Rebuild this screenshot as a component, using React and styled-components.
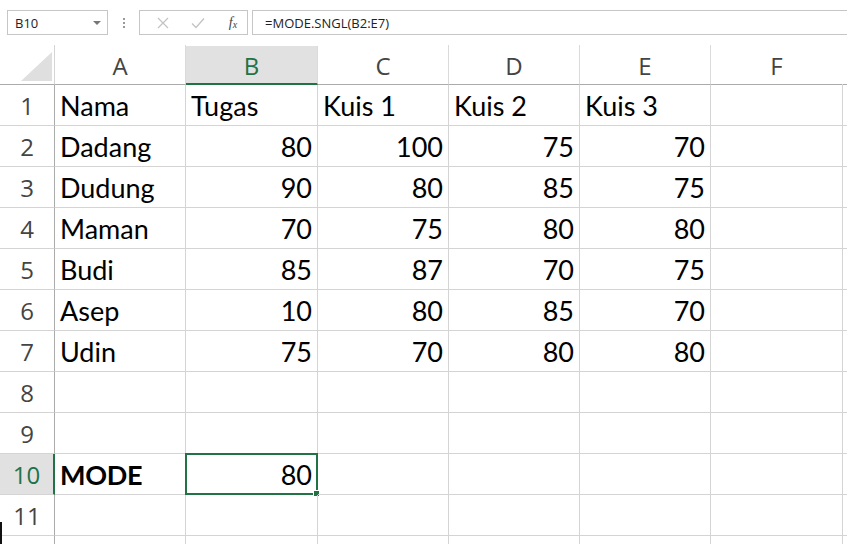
import styled, { createGlobalStyle } from "styled-components";

const GlobalStyle = createGlobalStyle`
  html, body {
    margin: 0;
    padding: 0;
    background: #ffffff;
  }
  body {
    font-family: "Open Sans", "Liberation Sans", sans-serif;
  }
`;

const colWidths = [55, 131, 132, 131, 131, 131, 132];
const columns = ["A", "B", "C", "D", "E", "F"];

const rows = [
  ["Nama", "Tugas", "Kuis 1", "Kuis 2", "Kuis 3", ""],
  ["Dadang", 80, 100, 75, 70, ""],
  ["Dudung", 90, 80, 85, 75, ""],
  ["Maman", 70, 75, 80, 80, ""],
  ["Budi", 85, 87, 70, 75, ""],
  ["Asep", 10, 80, 85, 70, ""],
  ["Udin", 75, 70, 80, 80, ""],
  ["", "", "", "", "", ""],
  ["", "", "", "", "", ""],
  ["MODE", 80, "", "", "", ""],
  ["", "", "", "", "", ""],
  ["", "", "", "", "", ""],
];

const Page = styled.div`
  width: 847px;
  height: 544px;
  overflow: hidden;
  position: relative;
  background: #fff;
`;

const Toolbar = styled.div`
  display: flex;
  align-items: center;
  height: 45px;
  padding: 10px 0 10px 7px;
  box-sizing: border-box;
  background: #fff;
`;

const NameBox = styled.div`
  width: 101px;
  height: 25px;
  box-sizing: border-box;
  border: 1px solid #c6c6c6;
  display: flex;
  align-items: center;
  justify-content: space-between;
  padding: 0 6px 0 7px;
  font-size: 13px;
  color: #222;
`;

const Caret = styled.span`
  width: 0;
  height: 0;
  border-left: 4px solid transparent;
  border-right: 4px solid transparent;
  border-top: 4px solid #777;
`;

const Grip = styled.div`
  width: 31px;
  display: flex;
  flex-direction: column;
  align-items: center;
  gap: 2px;
  & > span {
    width: 2px;
    height: 2px;
    background: #9a9a9a;
  }
`;

const FxBox = styled.div`
  width: 109px;
  height: 25px;
  box-sizing: border-box;
  border: 1px solid #c6c6c6;
  display: flex;
  align-items: center;
  padding-left: 13px;
  gap: 15px;
`;

const FxButton = styled.span`
  width: 20px;
  display: flex;
  justify-content: center;
  align-items: center;
  color: ${(p) => (p.$active ? "#444" : "#c4c4c4")};
  font-family: "Liberation Serif", serif;
  font-style: italic;
  font-size: 14px;
`;

const FormulaInput = styled.div`
  flex: 1;
  height: 25px;
  margin-left: 4px;
  box-sizing: border-box;
  border: 1px solid #c6c6c6;
  border-right: none;
  display: flex;
  align-items: center;
  padding-left: 12px;
  font-size: 13px;
  color: #222;
`;

const Sheet = styled.div`
  display: grid;
  grid-template-columns: ${colWidths.map((w) => w + "px").join(" ")} 1fr;
  grid-auto-rows: 41px;
  grid-template-rows: 40px;
`;

const Corner = styled.div`
  border-bottom: 1px solid #ababab;
  border-right: 1px solid #d4d4d4;
  position: relative;
  box-sizing: border-box;
  svg {
    position: absolute;
    left: 21px;
    top: 7px;
  }
`;

const ColHeader = styled.div`
  box-sizing: border-box;
  margin-top: ${(p) => (p.$selected ? "1px" : "0")};
  background: ${(p) => (p.$selected ? "#e1e1e1" : "#fff")};
  border-bottom: ${(p) => (p.$selected ? "2px solid #217346" : "1px solid #ababab")};
  border-right: 1px solid ${(p) => (p.$last ? "#fff" : "#dadada")};
  display: flex;
  align-items: center;
  justify-content: center;
  font-size: 24px;
  padding-top: ${(p) => (p.$selected ? "1px" : "2px")};
  color: ${(p) => (p.$selected ? "#217346" : "#444")};
  font-family: "Open Sans", "Liberation Sans", sans-serif;
`;

const RowHeader = styled.div`
  box-sizing: border-box;
  background: ${(p) => (p.$selected ? "#e1e1e1" : "#fff")};
  border-bottom: 1px solid #d4d4d4;
  border-right: ${(p) => (p.$selected ? "2px solid #217346" : "1px solid #ababab")};
  display: flex;
  align-items: center;
  justify-content: center;
  font-size: 24px;
  color: ${(p) => (p.$selected ? "#217346" : "#444")};
  font-family: "Open Sans", "Liberation Sans", sans-serif;
`;

const Cell = styled.div`
  box-sizing: border-box;
  border-bottom: 1px solid #d4d4d4;
  border-right: 1px solid #d4d4d4;
  display: flex;
  align-items: flex-end;
  justify-content: ${(p) => (p.$num ? "flex-end" : "flex-start")};
  padding: 0 5px 6px 5px;
  font-family: "Lato", "Liberation Sans", sans-serif;
  font-size: 27px;
  line-height: 1;
  font-weight: ${(p) => (p.$bold ? 700 : 400)};
  letter-spacing: ${(p) => (p.$bold ? "-0.3px" : "0")};
  color: #000;
  white-space: nowrap;
  position: relative;
`;

const Filler = styled.div`
  box-sizing: border-box;
  border-bottom: ${(p) => (p.$header ? "1px solid #ababab" : "1px solid #d4d4d4")};
`;

const Selection = styled.div`
  position: absolute;
  inset: -1px -1px -1px -1px;
  border: 2px solid #217346;
  pointer-events: none;
  &::after {
    content: "";
    position: absolute;
    right: -4px;
    bottom: -4px;
    width: 5px;
    height: 5px;
    background: #217346;
    border: 1px solid #fff;
  }
`;

const EdgeMark = styled.div`
  position: absolute;
  left: 0;
  top: 522px;
  width: 2px;
  height: 22px;
  background: #111;
`;

export default function App() {
  return (
    <Page>
      <GlobalStyle />
      <Toolbar>
        <NameBox>
          B10
          <Caret />
        </NameBox>
        <Grip>
          <span />
          <span />
          <span />
        </Grip>
        <FxBox>
          <FxButton>
            <svg width="12" height="12" viewBox="0 0 12 12">
              <path d="M1 1 L11 11 M11 1 L1 11" stroke="#c4c4c4" strokeWidth="1.3" fill="none" />
            </svg>
          </FxButton>
          <FxButton>
            <svg width="14" height="12" viewBox="0 0 14 12">
              <path d="M1 6.5 L5 10.5 L13 1.5" stroke="#c4c4c4" strokeWidth="1.4" fill="none" />
            </svg>
          </FxButton>
          <FxButton $active>
            f<span style={{ fontSize: "10px", marginTop: "3px" }}>x</span>
          </FxButton>
        </FxBox>
        <FormulaInput>=MODE.SNGL(B2:E7)</FormulaInput>
      </Toolbar>
      <Sheet>
        <Corner>
          <svg width="31" height="29" viewBox="0 0 31 29">
            <polygon points="31,0 31,29 0,29" fill="#dfdfdf" />
          </svg>
        </Corner>
        {columns.map((c, i) => (
          <ColHeader key={c} $selected={c === "B"} $last={i === columns.length - 1}>
            {c}
          </ColHeader>
        ))}
        <Filler $header />
        {rows.map((row, r) => [
          <RowHeader key={"h" + r} $selected={r === 9}>
            {r < 11 ? r + 1 : ""}
          </RowHeader>,
          ...row.map((v, c) => (
            <Cell key={r + "-" + c} $num={typeof v === "number"} $bold={r === 9 && c === 0}>
              {v}
              {r === 9 && c === 1 && <Selection />}
            </Cell>
          )),
          <Filler key={"f" + r} />,
        ])}
      </Sheet>
      <EdgeMark />
    </Page>
  );
}
